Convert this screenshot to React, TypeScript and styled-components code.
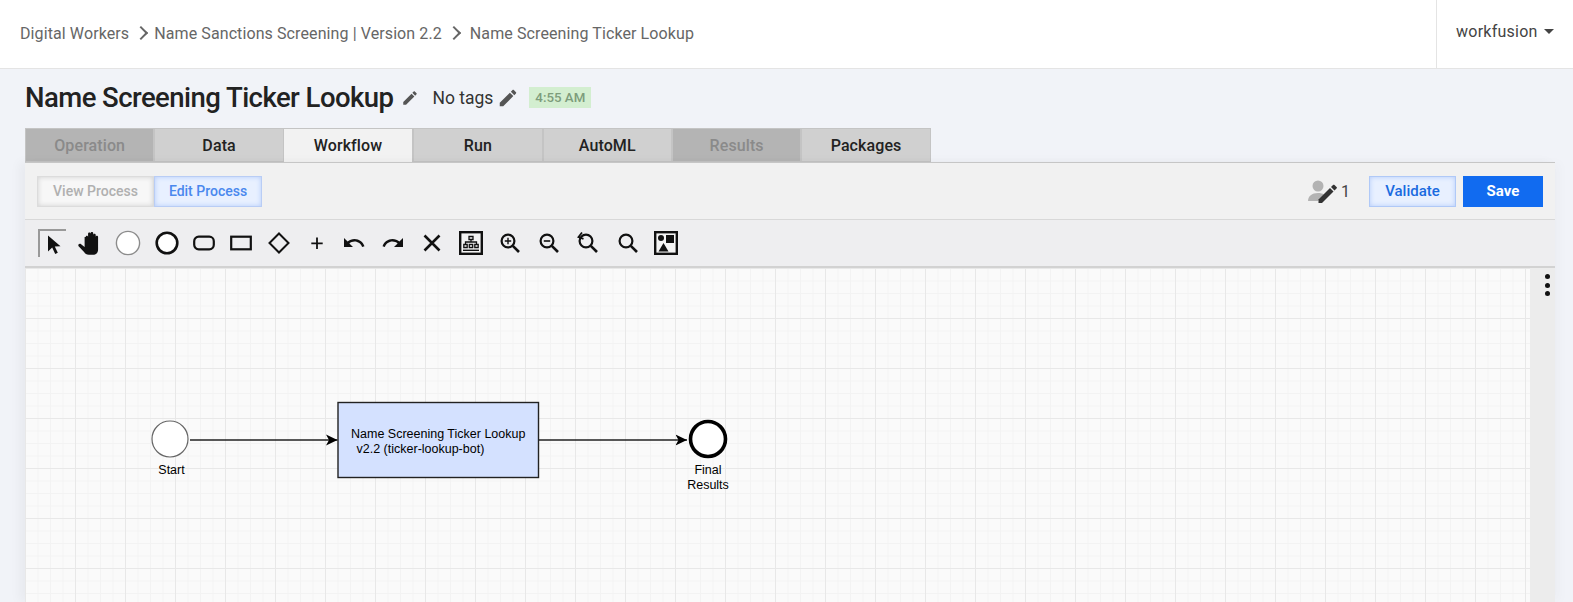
import React from "react";
import styled, { createGlobalStyle } from "styled-components";

const GlobalStyle = createGlobalStyle`
    html, body {
        margin: 0;
        height: 100%;
        overflow: hidden;
        background: #f1f3f8;
        font-family: Roboto, "Liberation Sans", sans-serif;
    }
`;

const PENCIL = "M3 17.25V21h3.75L17.81 9.94l-3.75-3.75L3 17.25zM20.71 7.04c.39-.39.39-1.02 0-1.41l-2.34-2.34c-.39-.39-1.02-.39-1.41 0l-1.83 1.83 3.75 3.75 1.83-1.83z";

const tabs = [
    { label: "Operation", state: "disabled" },
    { label: "Data", state: "idle" },
    { label: "Workflow", state: "active" },
    { label: "Run", state: "idle" },
    { label: "AutoML", state: "idle" },
    { label: "Results", state: "disabled" },
    { label: "Packages", state: "idle" },
];

const Lens = ({ children }: { children?: React.ReactNode }) => (
    <svg width="24" height="24" viewBox="0 0 24 24" fill="none" stroke="#111" strokeWidth="2.2">
        <circle cx="10" cy="10" r="6.4" />
        <path d="M14.8 14.8 21 21" strokeWidth="2.6" />
        {children}
    </svg>
);

// nudge: the mxGraph toolbar icons are not evenly spaced
const tools: { nudge: number; icon: React.ReactNode }[] = [
    { nudge: 0, icon: <svg width="24" height="24" viewBox="0 0 24 24"><path d="M7 3.5v16l4.2-4 3 6.5 2.6-1.2-3-6.3 5.7-.3z" fill="#111" /></svg> },
    { nudge: 0, icon: <svg width="28" height="28" viewBox="0 0 26 26"><path d="M9 7.5c0-1.6 2.2-1.6 2.2 0V4.4c0-1.6 2.4-1.6 2.4 0v-.5c0-1.6 2.4-1.6 2.4 0v1.6c0-1.5 2.3-1.5 2.3 0v1.9c0-1.4 2.2-1.4 2.2 0V19c0 3.2-2 5-4.6 5h-4c-2.2 0-3.300-1-4.400-2.600L2.400 16c-1-1.500.9-3 2.300-1.800L8 16.600V7.500z" fill="#111" /></svg> },
    { nudge: 0, icon: <svg width="26" height="26" viewBox="0 0 26 26"><circle cx="13" cy="13" r="11.6" fill="#fff" stroke="#8c8c8c" strokeWidth="1.4" /></svg> },
    { nudge: 1, icon: <svg width="26" height="26" viewBox="0 0 26 26"><circle cx="13" cy="13" r="10.3" fill="#fff" stroke="#111" strokeWidth="2.6" /></svg> },
    { nudge: -1, icon: <svg width="24" height="24" viewBox="0 0 24 24"><rect x="2.2" y="5.7" width="19.6" height="12.6" rx="4.5" fill="none" stroke="#111" strokeWidth="2.2" /></svg> },
    { nudge: -1, icon: <svg width="24" height="24" viewBox="0 0 24 24"><rect x="2.2" y="5.7" width="19.6" height="12.6" fill="none" stroke="#111" strokeWidth="2.2" /></svg> },
    { nudge: 0, icon: <svg width="26" height="26" viewBox="0 0 26 26"><path d="M13 3.500 22.500 13 13 22.500 3.500 13z" fill="none" stroke="#111" strokeWidth="2" /></svg> },
    { nudge: 0, icon: <svg width="24" height="24" viewBox="0 0 24 24"><path d="M12 6.500v11.500M6.300 12.300h11.400" stroke="#111" strokeWidth="1.800" /></svg> },
    { nudge: -1, icon: <svg width="24" height="24" viewBox="0 0 24 24"><path d="M12.500 8c-2.650 0-5.050.99-6.900 2.600L2 7v9h9l-3.620-3.620c1.390-1.160 3.160-1.880 5.120-1.880 3.540 0 6.550 2.310 7.600 5.500l2.370-.78C21.080 11.030 17.150 8 12.500 8z" fill="#111" /></svg> },
    { nudge: 1, icon: <svg width="24" height="24" viewBox="0 0 24 24"><path d="M18.400 10.600C16.550 8.990 14.150 8 11.500 8c-4.650 0-8.580 3.030-9.960 7.220L3.900 16c1.050-3.190 4.050-5.500 7.600-5.500 1.950 0 3.730.72 5.120 1.880L13 16h9V7l-3.600 3.600z" fill="#111" /></svg> },
    { nudge: 1, icon: <svg width="24" height="24" viewBox="0 0 24 24"><path d="M4.500 4.500l15 15M19.500 4.500l-15 15" stroke="#111" strokeWidth="2.600" /></svg> },
    { nudge: 1, icon: <svg width="26" height="26" viewBox="0 0 26 26"><rect x="2.200" y="2.200" width="21.600" height="21.600" fill="#f4f4f4" stroke="#111" strokeWidth="2.400" /><path d="M11 6.500h4v3h-4zM13 9.500v2.500M7.500 14.500V12h11v2.500M5.800 14.500h3.400v3H5.800zM11.300 14.500h3.400v3h-3.400zM16.800 14.500h3.400v3h-3.400z" fill="none" stroke="#111" strokeWidth="1.300" /><path d="M5 20.300h16" stroke="#111" strokeWidth="1.400" /></svg> },
    { nudge: 1, icon: <Lens><path d="M10 6.800v6.400M6.800 10h6.400" strokeWidth="1.400" /></Lens> },
    { nudge: 1, icon: <Lens><path d="M6.800 10h6.400" strokeWidth="1.600" /></Lens> },
    { nudge: 1, icon: <Lens><path d="M6 1.500 2.500 6l5 1.800" strokeWidth="1.800" /></Lens> },
    { nudge: 2, icon: <Lens /> },
    { nudge: 0, icon: <svg width="26" height="26" viewBox="0 0 26 26"><rect x="2.200" y="2.200" width="21.600" height="21.600" fill="#f4f4f4" stroke="#111" strokeWidth="2.400" /><circle cx="8" cy="8" r="3" fill="#111" /><rect x="13" y="5" width="8" height="8" fill="#111" /><path d="M10.500 13 15.500 21.500H5.500z" fill="#111" /></svg> },
];

const App: React.FC = () => {
    return (
        <Page>
            <GlobalStyle />
            <Header>
                <Breadcrumbs>
                    <Crumb>Digital Workers</Crumb>
                    <Chevron />
                    <Crumb>Name Sanctions Screening | Version 2.2</Crumb>
                    <Chevron />
                    <Crumb>Name Screening Ticker Lookup</Crumb>
                </Breadcrumbs>
                <UserMenu>
                    workfusion
                    <Caret />
                </UserMenu>
            </Header>

            <TitleRow>
                <Title>Name Screening Ticker Lookup</Title>
                <TitlePencil viewBox="0 0 24 24"><path d={PENCIL} /></TitlePencil>
                <Tags>No tags</Tags>
                <TagPencil viewBox="0 0 24 24"><path d={PENCIL} /></TagPencil>
                <TimeBadge>4:55 AM</TimeBadge>
            </TitleRow>

            <Tabs>
                {tabs.map((tab) => (
                    <Tab key={tab.label} $state={tab.state}>{tab.label}</Tab>
                ))}
            </Tabs>

            <Panel>
                <ActionBar>
                    <ModeSwitch>
                        <ModeButton>View Process</ModeButton>
                        <ModeButton $active>Edit Process</ModeButton>
                    </ModeSwitch>
                    <Actions>
                        <Editors>
                            <svg width="30" height="26" viewBox="0 0 30 26">
                                <circle cx="10" cy="8" r="5.500" fill="#b3b3b3" />
                                <path d="M0 23c0-5 4-8 10-8 2.500 0 4.500.5 6 1.500L10 23z" fill="#b3b3b3" />
                                <path d="M10.500 21.500v3.500h3.500L25.500 13.500 22 10z" fill="#333" />
                                <path d="M23 9l3.500 3.500 2-2c.6-.6.6-1 0-1.500l-2-2c-.5-.5-1-.5-1.500 0z" fill="#333" />
                            </svg>
                            <EditorCount>1</EditorCount>
                        </Editors>
                        <ValidateButton>Validate</ValidateButton>
                        <SaveButton>Save</SaveButton>
                    </Actions>
                </ActionBar>

                <ToolBar>
                    {tools.map((tool, i) => (
                        <Tool key={i} $pressed={i === 0} $nudge={tool.nudge}>{tool.icon}</Tool>
                    ))}
                </ToolBar>

                <Workspace>
                    <Canvas>
                        <svg width="1505" height="335" viewBox="0 0 1505 335">
                            <defs>
                                <marker id="arrow" viewBox="0 0 12 12" refX="11.500" refY="6" markerWidth="12" markerHeight="12" markerUnits="userSpaceOnUse" orient="auto">
                                    <path d="M0 0.500 11.500 6 0 11.500 3 6z" fill="#000" />
                                </marker>
                            </defs>
                            <g transform="translate(-25 -268)">
                                <path d="M538.500 440H687" stroke="#222" strokeWidth="1.300" fill="none" markerEnd="url(#arrow)" />
                                <path d="M190 440H337.500" stroke="#222" strokeWidth="1.300" fill="none" markerEnd="url(#arrow)" />
                                <circle cx="170" cy="439" r="18" fill="#fff" stroke="#666" strokeWidth="1.200" />
                                <rect x="338" y="402.500" width="200.500" height="75" fill="#d4e1ff" stroke="#222" strokeWidth="1.400" />
                                <circle cx="708" cy="439" r="17.500" fill="#fff" stroke="#000" strokeWidth="3.600" />
                                <DiagramText x="171.500" y="474" textAnchor="middle">Start</DiagramText>
                                <DiagramText x="351" y="438">Name Screening Ticker Lookup</DiagramText>
                                <DiagramText x="356.500" y="453">v2.2 (ticker-lookup-bot)</DiagramText>
                                <DiagramText x="708" y="474" textAnchor="middle">Final</DiagramText>
                                <DiagramText x="708" y="489" textAnchor="middle">Results</DiagramText>
                            </g>
                        </svg>
                    </Canvas>
                    <SideRail>
                        <Dot />
                        <Dot />
                        <Dot />
                    </SideRail>
                </Workspace>
            </Panel>
        </Page>
    );
};

const Page = styled.div`
    display: flex;
    flex-direction: column;
    height: 602px;
    overflow: hidden;
`;

const Header = styled.header`
    display: flex;
    align-items: stretch;
    justify-content: space-between;
    flex: none;
    height: 68px;
    background: #fff;
    border-bottom: 1px solid #e4e4e4;
`;

const Breadcrumbs = styled.nav`
    display: flex;
    align-items: center;
    padding-left: 20px;
    padding-bottom: 2px;
`;

const Crumb = styled.span`
    font-size: 16px;
    letter-spacing: 0.1px;
    color: #666;

    &:last-child {
        margin-left: 3px;
    }
`;

const Chevron = styled.i`
    width: 8px;
    height: 8px;
    margin: 0 8px 0 7px;
    border-top: 2px solid #666;
    border-right: 2px solid #666;
    transform: rotate(45deg);
`;

const UserMenu = styled.div`
    display: flex;
    align-items: center;
    width: 137px;
    padding: 0 0 5px 19px;
    box-sizing: border-box;
    border-left: 1px solid #e4e4e4;
    font-size: 16px;
    letter-spacing: 0.25px;
    color: #444;
`;

const Caret = styled.i`
    margin-left: 6px;
    border-left: 5.500px solid transparent;
    border-right: 5.500px solid transparent;
    border-top: 5.500px solid #444;
`;

const TitleRow = styled.div`
    display: flex;
    align-items: center;
    flex: none;
    height: 59px;
    padding-left: 25px;
    padding-bottom: 2px;
    box-sizing: border-box;
`;

const Title = styled.h1`
    margin: 0;
    font-size: 27.500px;
    font-weight: 500;
    letter-spacing: -0.550px;
    color: #222;
`;

const TitlePencil = styled.svg`
    width: 18px;
    height: 18px;
    margin-left: 8px;
    fill: #555;
`;

const Tags = styled.span`
    margin-left: 13px;
    font-size: 17.500px;
    color: #333;
`;

const TagPencil = styled.svg`
    width: 22px;
    height: 22px;
    margin-left: 4px;
    fill: #555;
`;

const TimeBadge = styled.span`
    margin-left: 10px;
    padding: 0 6px;
    height: 21px;
    line-height: 21px;
    background: #d3eed0;
    font-size: 13.300px;
    font-weight: 500;
    color: #7d9c7b;
`;

const Tabs = styled.div`
    display: flex;
    flex: none;
    height: 34px;
    margin-left: 25px;
`;

const Tab = styled.div<{ $state: string }>`
    display: flex;
    align-items: center;
    justify-content: center;
    width: 129.400px;
    box-sizing: border-box;
    font-size: 16px;
    font-weight: 500;
    letter-spacing: 0.1px;
    border: 1px solid #c4c4c4;
    border-left-width: ${({ $state }) => ($state === "active" ? "0" : "1px")};
    border-bottom: ${({ $state }) => ($state === "active" ? "0" : "1px solid #c4c4c4")};
    background: ${({ $state }) =>
        $state === "active" ? "#f2f2f2" : $state === "disabled" ? "#b4b4b4" : "#d0d0d0"};
    color: ${({ $state }) => ($state === "disabled" ? "#8a8a8a" : "#222")};
`;

const Panel = styled.main`
    display: flex;
    flex: 1;
    flex-direction: column;
    min-height: 0;
    width: 1530px;
    margin-left: 25px;
    border-top: 1px solid #c6c6c6;
    box-shadow: -6px 0 10px rgba(0, 0, 0, 0.04), 6px 0 10px rgba(0, 0, 0, 0.02);
`;

const ActionBar = styled.div`
    display: flex;
    align-items: center;
    justify-content: space-between;
    flex: none;
    height: 56px;
    padding: 0 12px 0 12px;
    background: #f1f1f1;
    border-bottom: 1px solid #d8d8d8;
`;

const ModeSwitch = styled.div`
    display: flex;
`;

const ModeButton = styled.div<{ $active?: boolean }>`
    display: flex;
    align-items: center;
    justify-content: center;
    width: ${({ $active }) => ($active ? "108px" : "117px")};
    height: 31px;
    box-sizing: border-box;
    font-size: 14px;
    font-weight: 500;
    border: 1px solid ${({ $active }) => ($active ? "#b9cdf5" : "#dcdcdc")};
    background: ${({ $active }) => ($active ? "#e8f0ff" : "#f7f7f7")};
    color: ${({ $active }) => ($active ? "#4a88ee" : "#b0b0b0")};
    box-shadow: inset 0 0 5px ${({ $active }) => ($active ? "#b4ccfa" : "#cfcfcf")};
`;

const Actions = styled.div`
    display: flex;
    align-items: center;
`;

const Editors = styled.div`
    display: flex;
    align-items: center;
    margin-right: 19px;
`;

const EditorCount = styled.span`
    margin-left: 3px;
    font-size: 16px;
    color: #444;
`;

const ValidateButton = styled.div`
    display: flex;
    align-items: center;
    justify-content: center;
    width: 87px;
    height: 31px;
    box-sizing: border-box;
    font-size: 15px;
    font-weight: 500;
    color: #1a6be0;
    background: #e8f0ff;
    border: 1px solid #b0c9f7;
    box-shadow: inset 0 0 5px #b4ccfa;
`;

const SaveButton = styled.div`
    display: flex;
    align-items: center;
    justify-content: center;
    width: 80px;
    height: 31px;
    margin-left: 7px;
    font-size: 15px;
    font-weight: 700;
    color: #fff;
    background: #116bf0;
`;

const ToolBar = styled.div`
    display: flex;
    align-items: center;
    flex: none;
    height: 46px;
    padding-left: 8px;
    background: #eeeef0;
    border-bottom: 2px solid #d2d2d2;
`;

const Tool = styled.div<{ $pressed?: boolean; $nudge: number }>`
    display: flex;
    align-items: center;
    justify-content: center;
    flex: none;
    width: 38px;
    height: 28px;
    margin-left: ${({ $nudge }) => $nudge}px;
    box-sizing: border-box;
    ${({ $pressed }) =>
        $pressed &&
        `
        width: 28px;
        margin: 0 5px;
        border-top: 2px solid #999;
        border-left: 2px solid #999;
    `}
`;

const Workspace = styled.div`
    display: flex;
    flex: 1;
    min-height: 0;
`;

// 50px major lines over 12.5px minor lines, like the mxGraph background
const Canvas = styled.div`
    flex: 1;
    min-width: 0;
    overflow: hidden;
    background-color: #fafafa;
    background-image:
        linear-gradient(#e8e8e8 1px, transparent 1px),
        linear-gradient(90deg, #e8e8e8 1px, transparent 1px),
        linear-gradient(#f3f3f3 1px, transparent 1px),
        linear-gradient(90deg, #f3f3f3 1px, transparent 1px);
    background-size: 50px 50px, 50px 50px, 12.500px 12.500px, 12.500px 12.500px;
`;

const DiagramText = styled.text`
    font-family: "Liberation Sans", Arial, sans-serif;
    font-size: 12.500px;
    fill: #000;
`;

const SideRail = styled.aside`
    display: flex;
    flex-direction: column;
    align-items: flex-end;
    gap: 3.500px;
    flex: none;
    width: 25px;
    box-sizing: border-box;
    padding: 6px 5px 0 0;
    background: #ececec;
`;

const Dot = styled.i`
    width: 5px;
    height: 5px;
    border-radius: 50%;
    background: #111;
`;

export default App;
